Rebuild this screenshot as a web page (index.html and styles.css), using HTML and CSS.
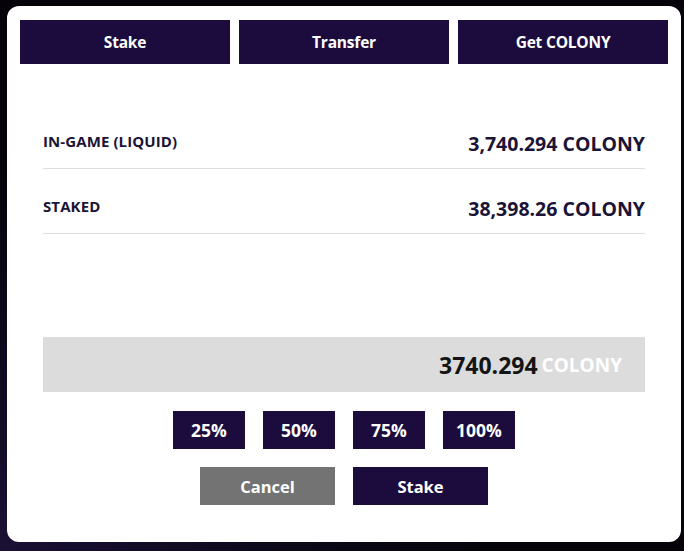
FILE: index.html
```html
<!DOCTYPE html>
<html>
<head>
<meta charset="utf-8">
<link rel="stylesheet" href="styles.css">
</head>
<body>
<div class="card">
  <div class="tabs">
    <button class="tab">Stake</button>
    <button class="tab">Transfer</button>
    <button class="tab">Get COLONY</button>
  </div>
  <div class="content">
    <div class="rows">
      <div class="row">
        <span class="label">IN-GAME (LIQUID)</span>
        <span class="value">3,740.294 COLONY</span>
      </div>
      <div class="row">
        <span class="label">STAKED</span>
        <span class="value">38,398.26 COLONY</span>
      </div>
    </div>
    <div class="amount">
      <span class="num">3740.294</span><span class="unit">COLONY</span>
    </div>
    <div class="pcts">
      <button class="pct">25%</button>
      <button class="pct">50%</button>
      <button class="pct">75%</button>
      <button class="pct">100%</button>
    </div>
    <div class="actions">
      <button class="act cancel">Cancel</button>
      <button class="act stake">Stake</button>
    </div>
  </div>
</div>
</body>
</html>
```

FILE: styles.css
```css
html, body {
  margin: 0;
  padding: 0;
}
body {
  width: 684px;
  height: 551px;
  overflow: hidden;
  background: radial-gradient(ellipse 500px 400px at 0% 100%, #1a1035 0%, #0b0818 60%, #050309 100%);
  font-family: "Open Sans", "Noto Sans", sans-serif;
  padding: 6px 3px 0 7px;
  box-sizing: border-box;
}
button {
  font-family: inherit;
  border: none;
  cursor: pointer;
  color: #fff;
  padding: 0;
}
.card {
  width: 674px;
  height: 536px;
  background: #fff;
  border-radius: 12px;
  box-sizing: border-box;
  padding: 14px 13px;
}
.tabs {
  display: grid;
  grid-template-columns: repeat(3, 1fr);
  gap: 9px;
}
.tab {
  height: 44px;
  background: #1c0c3d;
  font-size: 15.5px;
  font-weight: 700;
  letter-spacing: -0.2px;
}
.content {
  padding: 0 23px;
}
.rows {
  margin-top: 40px;
}
.row {
  display: flex;
  justify-content: space-between;
  align-items: center;
  height: 65px;
  padding-top: 14px;
  box-sizing: border-box;
  border-bottom: 1px solid #dedede;
}
.label {
  font-size: 15px;
  font-weight: 700;
  color: #1b1437;
  margin-bottom: 4px;
  letter-spacing: 0.1px;
}
.value {
  font-size: 19.5px;
  font-weight: 700;
  color: #1b1437;
  letter-spacing: 0;
}
.amount {
  margin-top: 103px;
  height: 55px;
  background: #dcdcdc;
  display: flex;
  justify-content: flex-end;
  align-items: center;
  padding-right: 23px;
  gap: 4px;
}
.num {
  font-size: 23px;
  font-weight: 700;
  color: #141414;
}
.unit {
  font-size: 19px;
  font-weight: 700;
  color: #fff;
}
.pcts {
  margin-top: 19px;
  display: flex;
  justify-content: center;
  gap: 18px;
}
.pct {
  width: 72px;
  height: 38px;
  background: #1c0c3d;
  font-size: 17.5px;
  font-weight: 700;
}
.actions {
  margin-top: 18px;
  display: flex;
  justify-content: center;
  gap: 18px;
}
.act {
  width: 135px;
  height: 38px;
  font-size: 16.5px;
  font-weight: 700;
}
.cancel {
  background: #737373;
}
.stake {
  background: #1c0c3d;
}
```
